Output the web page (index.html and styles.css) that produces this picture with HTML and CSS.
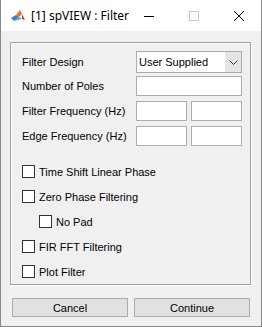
FILE: index.html
```html
<!DOCTYPE html>
<html lang="en">

<head>
    <meta charset="UTF-8">
    <title>[1] spVIEW : Filter</title>
    <link rel="stylesheet" href="styles.css">
</head>

<body>
    <div class="window">
        <div class="titlebar">
            <svg class="logo" width="16" height="16" viewBox="0 0 16 16">
                <polygon points="1,10 6,7 9,9 4,13" fill="#3a7fc0" />
                <polygon points="6,7 10,2 12,6 9,9" fill="#e2732b" />
                <polygon points="10,2 15,12 12,11 12,6" fill="#c0392b" />
                <polygon points="4,13 9,9 12,11" fill="#6a9fd0" />
            </svg>
            <span class="title">[1] spVIEW : Filter</span>
            <span class="ctl min">
                <svg width="10" height="10" viewBox="0 0 10 10"><line x1="0" y1="5.5" x2="10" y2="5.5" stroke="#000" /></svg>
            </span>
            <span class="ctl max">
                <svg width="10" height="10" viewBox="0 0 10 10"><rect x="0.5" y="0.5" width="9" height="9" fill="none" stroke="#ccc" /></svg>
            </span>
            <span class="ctl close">
                <svg width="10" height="10" viewBox="0 0 10 10"><path d="M0,0 L10,10 M10,0 L0,10" stroke="#000" /></svg>
            </span>
        </div>
        <div class="client">
            <div class="group">
                <div class="row first">
                    <span class="label">Filter Design</span>
                    <div class="popup">
                        <span class="popup-text">User Supplied</span>
                        <span class="popup-arrow">
                            <svg width="9" height="5" viewBox="0 0 9 5"><path d="M0.5,0.5 L4.5,4.5 L8.5,0.5" fill="none" stroke="#444" /></svg>
                        </span>
                    </div>
                </div>
                <div class="row tight">
                    <span class="label">Number of Poles</span>
                    <div class="edit wide"></div>
                </div>
                <div class="row">
                    <span class="label">Filter Frequency (Hz)</span>
                    <div class="pair">
                        <div class="edit"></div>
                        <div class="edit"></div>
                    </div>
                </div>
                <div class="row">
                    <span class="label">Edge Frequency (Hz)</span>
                    <div class="pair">
                        <div class="edit"></div>
                        <div class="edit"></div>
                    </div>
                </div>

                <div class="checks">
                    <label class="check"><span class="box"></span>Time Shift Linear Phase</label>
                    <label class="check"><span class="box"></span>Zero Phase Filtering</label>
                    <label class="check sub"><span class="box"></span>No Pad</label>
                    <label class="check"><span class="box"></span>FIR FFT Filtering</label>
                    <label class="check"><span class="box"></span>Plot Filter</label>
                </div>
            </div>
            <div class="buttons">
                <span class="btn">Cancel</span>
                <span class="btn">Continue</span>
            </div>
        </div>
    </div>
</body>

</html>
```

FILE: styles.css
```css
* {
    margin: 0;
    padding: 0;
    box-sizing: border-box;
}

body {
    font-family: "Liberation Sans", Arial, sans-serif;
    font-size: 11px;
    color: #000;
}

.window {
    width: 262px;
    height: 327px;
    border: 1px solid #888;
    border-top: none;
    display: flex;
    flex-direction: column;
    background-color: #f0f0f0;
}

.titlebar {
    height: 31px;
    background-color: #fff;
    display: flex;
    align-items: center;
}

.logo {
    margin-left: 9px;
    flex-shrink: 0;
}

.title {
    font-family: "Noto Sans", sans-serif;
    font-size: 12px;
    margin-left: 5px;
    flex: 1;
    min-width: 0;
    white-space: nowrap;
}

.ctl {
    display: flex;
    justify-content: center;
    width: 45px;
    flex-shrink: 0;
}

.client {
    flex: 1;
    padding: 11px 0 0 9px;
}

.group {
    width: 241px;
    height: 243px;
    border: 1px solid #a0a0a0;
    box-shadow: inset 1px 1px #fff, 1px 1px #fff;
    padding: 8px 0 0 11px;
}

.row {
    display: flex;
    align-items: center;
    margin-top: 5px;
}

.row.first {
    margin-top: 0;
}

.row.tight {
    margin-top: 3px;
}

.label {
    width: 114px;
}

.popup {
    width: 106px;
    height: 22px;
    border: 1px solid #acacac;
    background-color: #fff;
    display: flex;
    align-items: center;
}

.popup-text {
    flex: 1;
    padding-left: 2px;
}

.popup-arrow {
    width: 16px;
    height: 100%;
    background-color: #e5e5e5;
    display: flex;
    align-items: center;
    justify-content: center;
}

.edit {
    width: 51px;
    height: 20px;
    border: 1px solid #acacac;
    background-color: #fff;
}

.edit.wide {
    width: 106px;
}

.pair {
    display: flex;
    gap: 4px;
}

.checks {
    display: flex;
    flex-direction: column;
    gap: 12px;
    margin-top: 19px;
}

.check {
    display: flex;
    align-items: center;
    height: 13px;
}

.check.sub {
    margin-left: 17px;
}

.box {
    width: 13px;
    height: 13px;
    border: 1px solid #333;
    background-color: #fff;
    margin-right: 4px;
}

.buttons {
    display: flex;
    gap: 6px;
    margin: 13px 0 0 2px;
}

.btn {
    width: 116px;
    height: 19px;
    border: 1px solid #adadad;
    background-color: #e1e1e1;
    display: flex;
    align-items: center;
    justify-content: center;
}
```
